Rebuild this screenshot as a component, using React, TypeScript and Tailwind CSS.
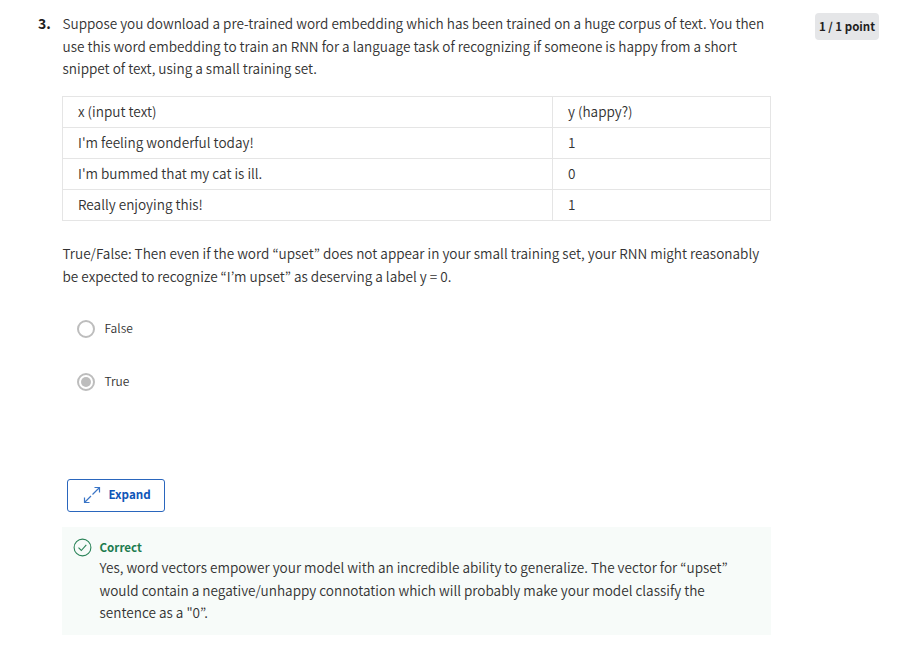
import React from "react";

const rows = [
  ["x (input text)", "y (happy?)"],
  ["I'm feeling wonderful today!", "1"],
  ["I'm bummed that my cat is ill.", "0"],
  ["Really enjoying this!", "1"],
];

function Line({ children, className = "" }: { children: React.ReactNode; className?: string }) {
  return (
    <div className="whitespace-nowrap">
      <span className={className}>{children}</span>
    </div>
  );
}

function Radio({ checked }: { checked?: boolean }) {
  return (
    <span className="flex size-[18px] shrink-0 items-center justify-center rounded-full border-2 border-[#bdbdbd] bg-white">
      {checked && <span className="size-[10px] rounded-full bg-[#bdbdbd]" />}
    </span>
  );
}

export default function App() {
  return (
    <div className="flex h-[650px] w-[908px] items-start overflow-hidden bg-white font-['Noto_Sans_CJK_KR','Noto_Sans',sans-serif] text-[13.57px] font-[350] leading-[22.5px] text-[#333333]">
      <div className="w-[62px] shrink-0 pl-[38px] pt-[12px] text-[14px] font-bold text-[#1f1f1f]">3.</div>
      <main className="w-[709px] shrink-0 pt-[12px]">
        <div className="pl-[0.5px]">
          <Line className="tracking-[-0.005px]">Suppose you download a pre-trained word embedding which has been trained on a huge corpus of text. You then</Line>
          <Line>use this word embedding to train an RNN for a language task of recognizing if someone is happy from a short</Line>
          <Line>snippet of text, using a small training set.</Line>
        </div>

        <table className="mt-[16px] w-[709px] table-fixed border-collapse">
          <colgroup>
            <col className="w-[490px]" />
            <col />
          </colgroup>
          <tbody>
            {rows.map(([x, y]) => (
              <tr key={x} className="h-[31px]">
                <td className="border border-[#e5e5e5] py-0 pl-[15px]">{x}</td>
                <td className="border border-[#e5e5e5] py-0 pl-[15px]">{y}</td>
              </tr>
            ))}
          </tbody>
        </table>

        <div className="mt-[21.5px] pl-[0.5px]">
          <Line>True/False: Then even if the word “upset” does not appear in your small training set, your RNN might reasonably</Line>
          <Line>be expected to recognize “I’m upset” as deserving a label y = 0.</Line>
        </div>

        <div className="mt-[30.5px] flex flex-col gap-[31px] pl-[15px] text-[12px]">
          <label className="flex h-[22px] items-center gap-[9.5px]">
            <Radio />
            <span>False</span>
          </label>
          <label className="flex h-[22px] items-center gap-[9.5px]">
            <Radio checked />
            <span>True</span>
          </label>
        </div>

        <button className="ml-[5px] mt-[86px] flex h-[33px] w-[98px] items-center rounded-[3px] border border-[#2a66bd] pl-[15px] text-[11.6px] font-bold text-[#0f56b8]">
          <svg width="18" height="18" viewBox="0 0 18 18" fill="none" stroke="#3a75c6" strokeWidth="1.2">
            <path d="M11.5 1.5h5v5M16.5 1.5l-7 7M6.5 16.5h-5v-5M1.5 16.5l6.5-6.5" />
          </svg>
          <span className="ml-[7.5px] pb-px">Expand</span>
        </button>

        <section className="mt-[15px] flex h-[108px] bg-[#f7fbf9] pl-[11px]">
          <svg className="mt-[11.5px] shrink-0" width="19" height="19" viewBox="0 0 19 19" fill="none" stroke="#2a8358" strokeWidth="1.1">
            <circle cx="9.5" cy="9.5" r="8.4" />
            <path d="M5.5 9.7l2.8 2.8 5-5.6" />
          </svg>
          <div className="ml-[7.5px] pt-[10px]">
            <div className="h-[19.5px] text-[11.6px] font-bold leading-[20px] text-[#1d7c50]">Correct</div>
            <Line>Yes, word vectors empower your model with an incredible ability to generalize. The vector for “upset”</Line>
            <Line>would contain a negative/unhappy connotation which will probably make your model classify the</Line>
            <Line>sentence as a "0”.</Line>
          </div>
        </section>
      </main>
      <div className="ml-[44px] mt-[13px] flex h-[27px] w-[64px] shrink-0 items-center justify-center whitespace-nowrap rounded-[4px] bg-[#e5e6e8] pb-px text-[11.5px] font-bold text-[#1f1f1f]">
        1 / 1 point
      </div>
    </div>
  );
}
